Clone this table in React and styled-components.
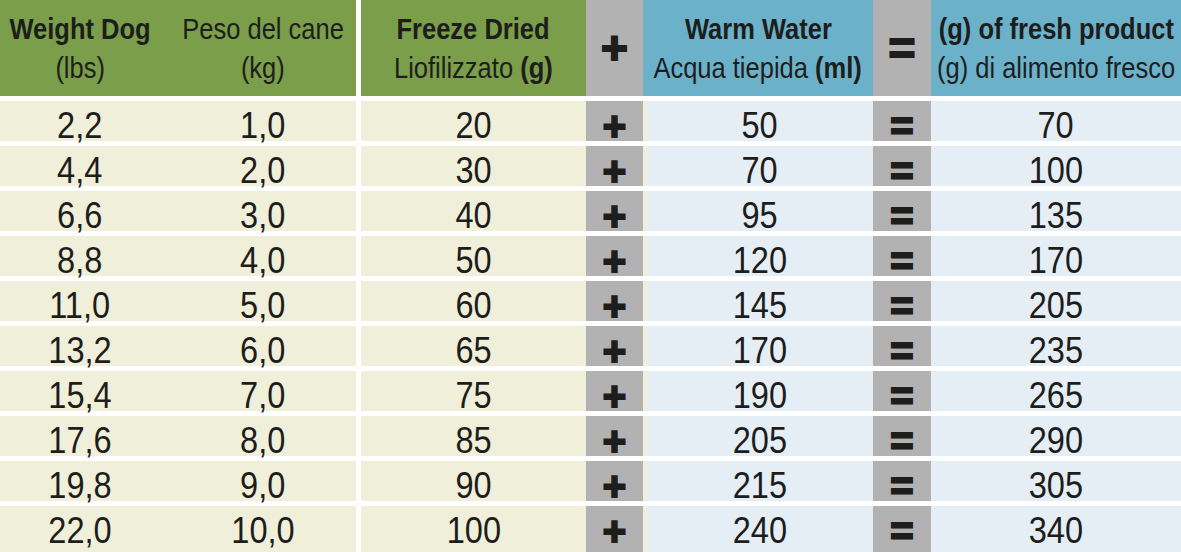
import React from 'react'
import styled, { createGlobalStyle, css } from 'styled-components'

const GlobalStyle = createGlobalStyle`
  html, body {
    margin: 0;
    padding: 0;
    background: #ffffff;
  }
  body {
    font-family: 'Liberation Sans', Arial, sans-serif;
    color: #1d1d1b;
  }
`

const tones = {
  green: '#7a9e4a',
  sky: '#6cb1ca',
  grey: '#b2b2b3',
  beige: '#f0efd9',
  ice: '#e5eef4',
}

const Table = styled.div`
  display: grid;
  grid-template-columns: 160px 196px 230px 57px 230px 58px 250px;
  grid-template-rows: 96px repeat(9, 40px) 1fr;
  row-gap: 5px;
  width: 1181px;
  height: 100vh;
  overflow: hidden;
`

const HeadCell = styled.div`
  background: ${p => tones[p.$tone]};
  margin-left: ${p => (p.$split ? '5px' : '0')};
  padding-left: ${p => (p.$shift ? '10px' : '0')};
  display: flex;
  flex-direction: column;
  align-items: center;
  justify-content: center;
  font-size: 30px;
  line-height: 39px;
  white-space: nowrap;
`

const Line = styled.div`
  font-weight: ${p => (p.$bold ? 700 : 400)};
`

const Squeeze = styled.span`
  display: inline-block;
  transform: scaleX(${p => p.$x || 0.85});
  white-space: nowrap;
`

const Cell = styled.div`
  background: ${p => tones[p.$tone]};
  margin-left: ${p => (p.$split ? '5px' : '0')};
  padding-left: ${p => (p.$shift ? '10px' : '0')};
  border-left: ${p => (p.$stripe ? `4px solid ${tones.beige}` : '0')};
  text-align: center;
  font-size: 37px;
  line-height: 32px;
  padding-top: 9px;
  white-space: nowrap;
`

const opStyle = css`
  font-weight: 700;
  -webkit-text-stroke: 2px #1d1d1b;
  text-shadow: 1px 1px 0 rgba(0, 0, 0, 0.18);
`

const Operator = styled.span`
  ${opStyle};
  display: inline-block;
  font-size: ${p => (p.$big ? '46px' : '40px')};
`

const rows = [
  ['2,2', '1,0', '20', '50', '70'],
  ['4,4', '2,0', '30', '70', '100'],
  ['6,6', '3,0', '40', '95', '135'],
  ['8,8', '4,0', '50', '120', '170'],
  ['11,0', '5,0', '60', '145', '205'],
  ['13,2', '6,0', '65', '170', '235'],
  ['15,4', '7,0', '75', '190', '265'],
  ['17,6', '8,0', '85', '205', '290'],
  ['19,8', '9,0', '90', '215', '305'],
  ['22,0', '10,0', '100', '240', '340'],
]

const Num = ({ children }) => <Squeeze $x={0.88}>{children}</Squeeze>

export default function App() {
  return (
    <>
      <GlobalStyle />
      <Table>
        <HeadCell $tone="green">
          <Line $bold><Squeeze>Weight Dog</Squeeze></Line>
          <Line><Squeeze>(lbs)</Squeeze></Line>
        </HeadCell>
        <HeadCell $tone="green" $shift>
          <Line><Squeeze>Peso del cane</Squeeze></Line>
          <Line><Squeeze>(kg)</Squeeze></Line>
        </HeadCell>
        <HeadCell $tone="green" $split>
          <Line $bold><Squeeze>Freeze Dried</Squeeze></Line>
          <Line><Squeeze>Liofilizzato <b>(g)</b></Squeeze></Line>
        </HeadCell>
        <HeadCell $tone="grey">
          <Operator $big>+</Operator>
        </HeadCell>
        <HeadCell $tone="sky">
          <Line $bold><Squeeze>Warm Water</Squeeze></Line>
          <Line><Squeeze>Acqua tiepida <b>(ml)</b></Squeeze></Line>
        </HeadCell>
        <HeadCell $tone="grey">
          <Operator $big>=</Operator>
        </HeadCell>
        <HeadCell $tone="sky">
          <Line $bold><Squeeze>(g) of fresh product</Squeeze></Line>
          <Line><Squeeze>(g) di alimento fresco</Squeeze></Line>
        </HeadCell>

        {rows.map((r, i) => (
          <React.Fragment key={`row-${i}`}>
            <Cell $tone="beige"><Num>{r[0]}</Num></Cell>
            <Cell $tone="beige" $shift><Num>{r[1]}</Num></Cell>
            <Cell $tone="beige" $split><Num>{r[2]}</Num></Cell>
            <Cell $tone="grey"><Operator>+</Operator></Cell>
            <Cell $tone="ice" $stripe><Num>{r[3]}</Num></Cell>
            <Cell $tone="grey"><Operator>=</Operator></Cell>
            <Cell $tone="ice"><Num>{r[4]}</Num></Cell>
          </React.Fragment>
        ))}
      </Table>
    </>
  )
}
